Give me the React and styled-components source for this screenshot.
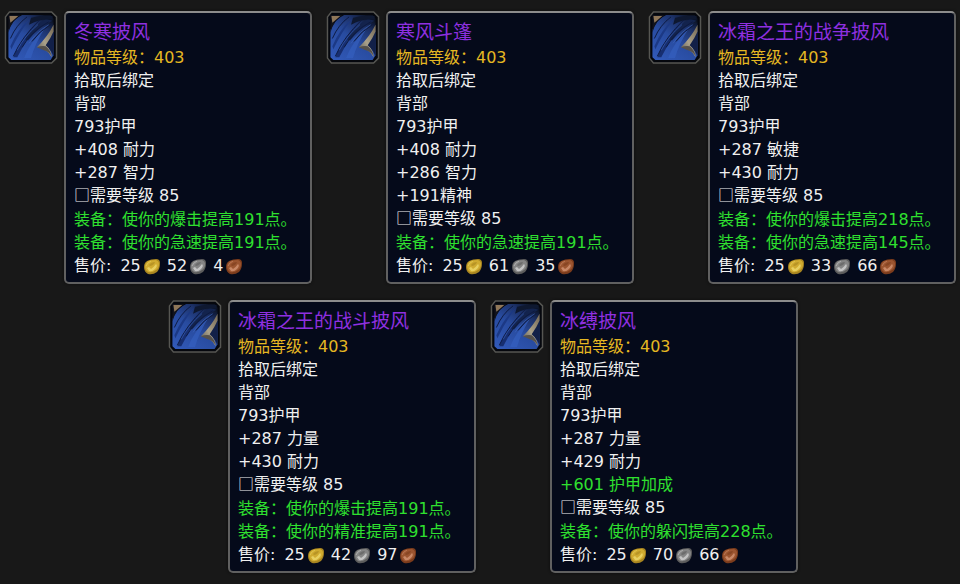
import React from 'react';
import styled, { createGlobalStyle } from 'styled-components';

const rows = [
  [
    {
      name: '冬寒披风',
      stats: ['+408 耐力', '+287 智力'],
      effects: ['使你的爆击提高191点。', '使你的急速提高191点。'],
      price: [25, 52, 4],
    },
    {
      name: '寒风斗篷',
      stats: ['+408 耐力', '+286 智力', '+191精神'],
      effects: ['使你的急速提高191点。'],
      price: [25, 61, 35],
    },
    {
      name: '冰霜之王的战争披风',
      stats: ['+287 敏捷', '+430 耐力'],
      effects: ['使你的爆击提高218点。', '使你的急速提高145点。'],
      price: [25, 33, 66],
    },
  ],
  [
    {
      name: '冰霜之王的战斗披风',
      stats: ['+287 力量', '+430 耐力'],
      effects: ['使你的爆击提高191点。', '使你的精准提高191点。'],
      price: [25, 42, 97],
    },
    {
      name: '冰缚披风',
      stats: ['+287 力量', '+429 耐力'],
      bonus: '+601 护甲加成',
      effects: ['使你的躲闪提高228点。'],
      price: [25, 70, 66],
    },
  ],
];

const coins = [
  { name: 'gold', dark: '#a88520', base: '#d0ab30', light: '#f0dc70' },
  { name: 'silver', dark: '#5c5c5c', base: '#858585', light: '#d8d8d8' },
  { name: 'copper', dark: '#7c3c1c', base: '#9c5530', light: '#d8997a' },
];

const Coin = ({ dark, base, light, name }) => (
  <CoinIcon viewBox="0 0 18 17" role="img" aria-label={name}>
    <path d="M1 9 Q1 5 4 3 Q8 1 13 1 Q17 1 17 5 Q17 11 14 14 Q10 17 5 16 Q1 14 1 9Z" fill={dark} />
    <path d="M2 9 Q2 5 5 3 Q9 2 13 2 Q16 3 16 6 Q16 10 13 12 Q9 15 5 14 Q2 12 2 9Z" fill={base} />
    <path d="M6 7 Q8 4 12 4 L11 6 Q9 8 7 8Z" fill={dark} opacity="0.6" />
    <path d="M4 10 L6 9 L8 11 Q11 9 13 6 Q15 8 12 11 Q9 14 6 13Z" fill={light} opacity="0.75" />
    <path d="M3 8 Q4 5 8 3" stroke={light} fill="none" opacity="0.5" />
  </CoinIcon>
);

const CloakIcon = () => (
  <ItemIcon viewBox="0 0 54 54" aria-hidden="true">
    <defs>
      <linearGradient id="cloth" x1="0.1" y1="1" x2="0.8" y2="0">
        <stop offset="0" stopColor="#3159b8" />
        <stop offset="0.5" stopColor="#284b9f" />
        <stop offset="0.8" stopColor="#1c3168" />
        <stop offset="1" stopColor="#0b1222" />
      </linearGradient>
      <linearGradient id="trim" x1="0" y1="1" x2="0.8" y2="0">
        <stop offset="0" stopColor="#4b4a4a" />
        <stop offset="0.5" stopColor="#aaa18a" />
        <stop offset="1" stopColor="#7d715c" />
      </linearGradient>
    </defs>
    <path d="M5 1 H48 L53 6 V48 L48 53 H5 L1 48 V6Z" fill="#05070d" stroke="#565652" strokeWidth="1.5" />
    <path d="M4 19 Q9 8 18 4 H47 L50 8 V45 L47 50 H7 L4 47Z" fill="url(#cloth)" />
    <path d="M4 4 H16 Q7 10 4 22Z" fill="#11131c" />
    <path d="M5 5 H14 L6 12Z" fill="#8f7759" />
    <path d="M9 47 Q14 32 32 13 Q22 30 13 47Z" fill="#172e70" />
    <path d="M6 36 Q13 19 26 8 Q15 22 7 39Z" fill="#1c3985" />
    <path d="M21 29 Q28 16 42 8 L49 10 Q34 17 24 30Z" fill="#13234d" />
    <path d="M27 7 Q37 4 49 5 V9 Q37 7 25 14Z" fill="#0e1830" />
    <path d="M20 48 Q25 33 42 16 Q31 33 27 48Z" fill="#3460bf" opacity="0.7" />
    <path
      d="M6 28 Q12 14 23 6 M9 46 Q18 26 36 9 M18 37 Q27 21 45 11 M28 31 Q35 21 48 13"
      stroke="#0d1a40"
      fill="none"
    />
    <path d="M13 40 Q20 26 34 14 M25 33 Q32 22 45 14" stroke="#3b66c0" fill="none" opacity="0.6" />
    <path d="M50 20 V46 Q47 38 40 35Z" fill="#122048" />
    <path d="M50 14 Q44 26 33 37 Q42 37 48 47 Q48 40 42 35 Q47 28 50 21Z" fill="url(#trim)" />
    <path d="M33 37 Q38 35 42 36 Q47 40 48 46 Q45 41 40 40Z" fill="#54504c" />
  </ItemIcon>
);

const ItemCard = ({ item }) => (
  <Item>
    <CloakIcon />
    <Tooltip>
      <Name>{item.name}</Name>
      <Line $color="#e5b822">物品等级：403</Line>
      <Line>拾取后绑定</Line>
      <Line>背部</Line>
      <Line>793护甲</Line>
      {item.stats.map((stat) => (
        <Line key={stat}>{stat}</Line>
      ))}
      {item.bonus && <Line $color="#2fe02f">{item.bonus}</Line>}
      <Requirement>
        <Box>□</Box>需要等级 85
      </Requirement>
      {item.effects.map((effect) => (
        <Line key={effect} $color="#2fe02f">
          装备：{effect}
        </Line>
      ))}
      <Price>
        <PriceLabel>售价:</PriceLabel>
        {coins.map((coin, i) => (
          <Amount key={coin.name}>
            {item.price[i]}
            <Coin {...coin} />
          </Amount>
        ))}
      </Price>
    </Tooltip>
  </Item>
);

const App = () => (
  <>
    <GlobalStyle />
    <Page>
      {rows.map((items, i) => (
        <ItemRow key={i} $inset={i > 0}>
          {items.map((item) => (
            <ItemCard key={item.name} item={item} />
          ))}
        </ItemRow>
      ))}
    </Page>
  </>
);

const GlobalStyle = createGlobalStyle`
  body {
    margin: 0;
    background: #181818;
    color: #f0f0f0;
    font: 16px/23px "DejaVu Sans", "Noto Sans CJK SC", sans-serif;
  }
`;

const Page = styled.main`
  display: flex;
  flex-direction: column;
  gap: 16px;
  padding: 11px 4px;
`;

const ItemRow = styled.ul`
  display: flex;
  justify-content: center;
  gap: 14px;
  margin: 0;
  padding: 0 0 0 ${(props) => (props.$inset ? '6px' : '0')};
  list-style: none;
`;

const Item = styled.li`
  display: flex;
  align-items: flex-start;
  gap: 6px;
`;

const ItemIcon = styled.svg`
  flex: none;
  width: 54px;
  height: 53px;
`;

const Tooltip = styled.article`
  box-sizing: border-box;
  width: 248px;
  padding: 6px 8px 4px;
  border: 2px solid #606060;
  border-top-color: #8c8c8c;
  border-radius: 5px;
  background: #050a1a;
  box-shadow: 0 0 3px #0c0c0c;
  white-space: nowrap;
`;

const Name = styled.h2`
  margin: 0;
  color: #8f30e0;
  font-size: 19px;
  font-weight: 400;
  line-height: 27px;
`;

const Line = styled.p`
  margin: 0;
  color: ${(props) => props.$color || 'inherit'};
`;

const Requirement = styled(Line)`
  line-height: 24px;
`;

const Box = styled.span`
  font-family: "Noto Sans CJK SC", sans-serif;
  line-height: 1;
`;

const Price = styled.div`
  display: flex;
  gap: 6px;
  line-height: 24px;
`;

const PriceLabel = styled.span`
  padding-right: 3px;
`;

const Amount = styled.span`
  display: flex;
  align-items: center;
  gap: 2px;
`;

const CoinIcon = styled.svg`
  width: 18px;
  height: 17px;
`;

export default App;
